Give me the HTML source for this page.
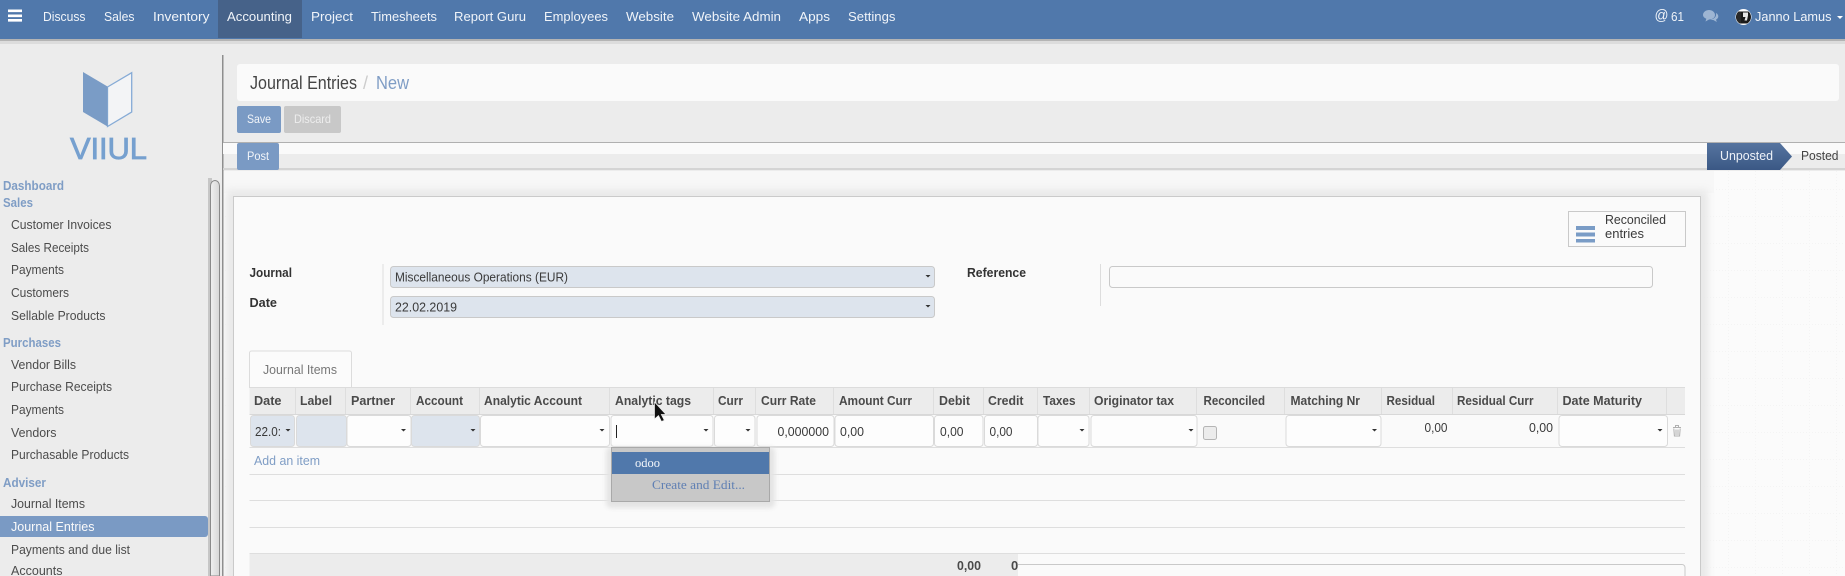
<!DOCTYPE html>
<html><head><meta charset="utf-8"><title>Journal Entries</title>
<style>
html,body{margin:0;padding:0;width:1845px;height:576px;overflow:hidden;background:#ececec}
svg{display:block;position:absolute;left:0;top:0}
text{font-family:"Liberation Sans",sans-serif;font-size:13px;fill:#444}
.n{fill:#f0f4f9}
.s{fill:#4c4c4c}
.b{font-weight:bold}
.h{font-weight:bold;fill:#4a4a4a}
.g{font-weight:bold;fill:#7f9dc5}
.t{fill:#3a3a3a}
</style></head><body>
<svg width="1845" height="576" viewBox="0 0 1845 576">
<defs>
<pattern id="dots" width="27" height="27" patternUnits="userSpaceOnUse"><rect width="27" height="27" fill="#fbfbfb"/><path d="M0 .5H27M.5 0V27" stroke="#f4f4f4" stroke-dasharray="1 2"/></pattern>
<filter id="bl" x="-5%" y="-5%" width="110%" height="110%"><feGaussianBlur stdDeviation="4"/></filter>
<filter id="bs" x="-20%" y="-20%" width="140%" height="140%"><feGaussianBlur stdDeviation="2.5"/></filter>
<linearGradient id="ug" x1="0" y1="0" x2="0" y2="1"><stop offset="0" stop-color="#56749f"/><stop offset="1" stop-color="#3b5885"/></linearGradient>
<linearGradient id="sb" x1="0" y1="0" x2="1" y2="0"><stop offset="0" stop-color="#f0f0f0"/><stop offset="1" stop-color="#d6d6d6"/></linearGradient>
<clipPath id="av"><circle cx="1743.500" cy="17" r="7.500"/></clipPath>
</defs>
<rect width="1845" height="576" fill="#ececec"/>

<!-- navbar -->
<rect y="39" width="1845" height="2" fill="#b4b4b4"/><rect y="41" width="1845" height="3" fill="#dcdcdc"/>
<rect width="1845" height="39" fill="#5078ab"/>
<rect x="218" width="84" height="38" fill="#466289"/>
<path d="M8 9.500h14v2.600H8zM8 14.500h14v2.600H8zM8 19h14v2.600H8z" fill="#fff"/>
<text class="n" x="43" y="21" textLength="42.500" lengthAdjust="spacingAndGlyphs">Discuss</text>
<text class="n" x="104" y="21" textLength="30.500" lengthAdjust="spacingAndGlyphs">Sales</text>
<text class="n" x="153" y="21" textLength="56.500" lengthAdjust="spacingAndGlyphs">Inventory</text>
<text class="n" x="227" y="21" textLength="65" lengthAdjust="spacingAndGlyphs">Accounting</text>
<text class="n" x="311" y="21" textLength="42" lengthAdjust="spacingAndGlyphs">Project</text>
<text class="n" x="371" y="21" textLength="66" lengthAdjust="spacingAndGlyphs">Timesheets</text>
<text class="n" x="454" y="21" textLength="72" lengthAdjust="spacingAndGlyphs">Report Guru</text>
<text class="n" x="544" y="21" textLength="64" lengthAdjust="spacingAndGlyphs">Employees</text>
<text class="n" x="626" y="21" textLength="48" lengthAdjust="spacingAndGlyphs">Website</text>
<text class="n" x="692" y="21" textLength="89" lengthAdjust="spacingAndGlyphs">Website Admin</text>
<text class="n" x="799" y="21" textLength="31" lengthAdjust="spacingAndGlyphs">Apps</text>
<text class="n" x="848" y="21" textLength="47.500" lengthAdjust="spacingAndGlyphs">Settings</text>
<text class="n" x="1654.500" y="20" style="font-size:15px" textLength="14" lengthAdjust="spacingAndGlyphs">@</text>
<text class="n" x="1671" y="21" textLength="13" lengthAdjust="spacingAndGlyphs">61</text>
<path d="M1703 15c0-3 3-5 6-5s6 2 6 5-3 4.500-6 4.500l-3.500 2 .8-2.800c-2-.7-3.300-2.200-3.300-3.700z" fill="#9db5d3"/>
<path d="M1716 13c1.500.8 2.300 2 2.300 3.400 0 1.400-.9 2.600-2.300 3.200l.8 2.400-3.500-2c-1 0-2-.2-3-.6 3.500 0 6.500-2.500 5.700-6.400z" fill="#9db5d3"/>
<circle cx="1743.500" cy="17" r="8" fill="#fff"/>
<g clip-path="url(#av)">
<rect x="1735" y="11.500" width="17" height="12" fill="#1a1a1a"/>
<path d="M1743 12.500h5v3l-1 5h-2.500l1-3.500h-2.500z" fill="#e6e6e6"/>
<path d="M1738 12v11M1740 12v11" stroke="#444" stroke-width=".7"/>
</g>
<text class="n" x="1755" y="21" textLength="76.500" lengthAdjust="spacingAndGlyphs">Janno Lamus</text>
<path d="M1837 16h6l-3 3z" fill="#fff"/>

<!-- main background -->
<rect x="223" y="171" width="1622" height="405" fill="url(#dots)"/>
<rect x="224" y="171" width="1490" height="22" fill="#f7f7f7"/>
<rect x="226" y="190" width="1482" height="400" fill="#e8e8e8" filter="url(#bl)"/>

<!-- sidebar divider -->
<rect x="222" y="55" width="1.500" height="521" fill="#8e8e8e"/>

<!-- logo -->
<path d="M107.500 87L131.700 72.700V112L107.500 126.500z" fill="#f3f4f6" stroke="#86abd6" stroke-width="1.300"/>
<path d="M83 72L107.500 86.500V126.500L83 112z" fill="#7a9cc6"/>
<text x="70" y="159" style="font-size:31px;fill:#76a0cf;stroke:#76a0cf;stroke-width:.8" textLength="77" lengthAdjust="spacing">VIIUL</text>

<!-- sidebar scrollbar -->
<rect x="208" y="178" width="4" height="398" fill="#c6c6c6"/>
<path d="M210.500 576V186a4.500 5.500 0 0 1 9 0V576z" fill="url(#sb)" stroke="#8a8a8a"/>

<!-- sidebar -->
<text class="g" x="3" y="190" textLength="61" lengthAdjust="spacingAndGlyphs">Dashboard</text>
<text class="g" x="3" y="207" textLength="30" lengthAdjust="spacingAndGlyphs">Sales</text>
<text class="s" x="11" y="229" textLength="100.500" lengthAdjust="spacingAndGlyphs">Customer Invoices</text>
<text class="s" x="11" y="252" textLength="78" lengthAdjust="spacingAndGlyphs">Sales Receipts</text>
<text class="s" x="11" y="274" textLength="53" lengthAdjust="spacingAndGlyphs">Payments</text>
<text class="s" x="11" y="297" textLength="58" lengthAdjust="spacingAndGlyphs">Customers</text>
<text class="s" x="11" y="320" textLength="94.500" lengthAdjust="spacingAndGlyphs">Sellable Products</text>
<text class="g" x="3" y="347" textLength="58" lengthAdjust="spacingAndGlyphs">Purchases</text>
<text class="s" x="11" y="369" textLength="65" lengthAdjust="spacingAndGlyphs">Vendor Bills</text>
<text class="s" x="11" y="391" textLength="101" lengthAdjust="spacingAndGlyphs">Purchase Receipts</text>
<text class="s" x="11" y="414" textLength="53" lengthAdjust="spacingAndGlyphs">Payments</text>
<text class="s" x="11" y="437" textLength="45.500" lengthAdjust="spacingAndGlyphs">Vendors</text>
<text class="s" x="11" y="459" textLength="118" lengthAdjust="spacingAndGlyphs">Purchasable Products</text>
<text class="g" x="3" y="487" textLength="43" lengthAdjust="spacingAndGlyphs">Adviser</text>
<text class="s" x="11" y="508" textLength="74" lengthAdjust="spacingAndGlyphs">Journal Items</text>
<path d="M0 516H205a3 3 0 0 1 3 3V534a3 3 0 0 1-3 3H0z" fill="#7a9ac4"/>
<text x="11" y="531" style="fill:#fafafa" textLength="83.500" lengthAdjust="spacingAndGlyphs">Journal Entries</text>
<text class="s" x="11" y="554" textLength="119" lengthAdjust="spacingAndGlyphs">Payments and due list</text>
<text class="s" x="11" y="575" textLength="51.500" lengthAdjust="spacingAndGlyphs">Accounts</text>

<!-- breadcrumb -->
<rect x="237" y="64" width="1602" height="37" rx="3" fill="#fafafa"/>
<text x="250" y="89" style="font-size:18px;fill:#444" textLength="107" lengthAdjust="spacingAndGlyphs">Journal Entries</text>
<text x="363" y="89" style="font-size:18px;fill:#ccc">/</text>
<text x="376" y="89" style="font-size:18px;fill:#7f9dc5" textLength="33" lengthAdjust="spacingAndGlyphs">New</text>
<rect x="237" y="106" width="44" height="27" rx="2" fill="#7a9ac4"/>
<text x="247" y="123" style="font-size:12px;fill:#f2f5f9" textLength="24" lengthAdjust="spacingAndGlyphs">Save</text>
<rect x="284" y="106" width="57" height="27" rx="2" fill="#c8c8c8"/>
<text x="294" y="123" style="font-size:12px;fill:#ededed" textLength="37" lengthAdjust="spacingAndGlyphs">Discard</text>

<!-- status bar -->
<rect x="223" y="142" width="1622" height="1" fill="#b0b0b0"/>
<rect x="223" y="143" width="1622" height="11" fill="#fafafa"/>
<rect x="223" y="168" width="1622" height="2" fill="#d4d4d4"/>
<rect x="237" y="143" width="42" height="27" rx="2" fill="#7a9ac4"/>
<text x="247" y="160" style="font-size:12px;fill:#f2f5f9" textLength="22" lengthAdjust="spacingAndGlyphs">Post</text>
<path d="M1707 143H1780L1792 156.500 1780 170H1707z" fill="url(#ug)"/>
<text x="1720" y="160" style="fill:#eef2f8" textLength="53" lengthAdjust="spacingAndGlyphs">Unposted</text>
<text x="1801" y="160" style="fill:#444" textLength="37.500" lengthAdjust="spacingAndGlyphs">Posted</text>

<!-- sheet -->
<rect x="233.500" y="196.500" width="1467" height="400" fill="#fafafa" stroke="#cacaca"/>

<rect x="1568.500" y="211.500" width="117" height="35" fill="#fafafa" stroke="#c9c9c9"/>
<path d="M1576 226h19v4h-19zM1576 232.500h19v4h-19zM1576 239h19v3.500h-19z" fill="#7a9cc6"/>
<text class="t" x="1605" y="224" style="font-size:12.500px" textLength="61" lengthAdjust="spacingAndGlyphs">Reconciled</text>
<text class="t" x="1605" y="238" style="font-size:12.500px" textLength="39" lengthAdjust="spacingAndGlyphs">entries</text>

<text class="b" x="249.500" y="277" style="fill:#333" textLength="42.500" lengthAdjust="spacingAndGlyphs">Journal</text>
<text class="b" x="249.500" y="307" style="fill:#333" textLength="27.500" lengthAdjust="spacingAndGlyphs">Date</text>
<rect x="382.500" y="264" width="1" height="61" fill="#ddd"/>
<rect x="390.500" y="266.500" width="544" height="21" rx="3" fill="#dde4ed" stroke="#c9c9c9"/>
<text class="t" x="395" y="281.500" textLength="173" lengthAdjust="spacingAndGlyphs">Miscellaneous Operations (EUR)</text>
<path d="M925.500 275h5l-2.500 2.500z" fill="#333"/>
<rect x="390.500" y="296.500" width="544" height="21" rx="3" fill="#dde4ed" stroke="#c9c9c9"/>
<text class="t" x="395" y="311.500" textLength="62" lengthAdjust="spacingAndGlyphs">22.02.2019</text>
<path d="M925.500 305h5l-2.500 2.500z" fill="#333"/>
<text class="b" x="967" y="277" style="fill:#333" textLength="59" lengthAdjust="spacingAndGlyphs">Reference</text>
<rect x="1100" y="264" width="1" height="42" fill="#ddd"/>
<rect x="1109.500" y="266.500" width="543" height="21" rx="3" fill="#fafafa" stroke="#c9c9c9"/>

<!-- tab -->
<path d="M249.500 388V353a2 2 0 0 1 2-2H349.500a2 2 0 0 1 2 2V388" fill="#fbfbfb" stroke="#dcdcdc"/>
<text x="263" y="374" style="fill:#777" textLength="74" lengthAdjust="spacingAndGlyphs">Journal Items</text>

<!-- table header -->
<rect x="249.500" y="388" width="1435.500" height="26" fill="#ececec"/>
<rect x="249.500" y="387" width="1435.500" height="1" fill="#dcdcdc"/>
<rect x="249.500" y="414" width="1435.500" height="1" fill="#d8d8d8"/>
<path d="M295.500 388v26M345.500 388v26M410.500 388v26M479.500 388v26M609.500 388v26M713.500 388v26M755.500 388v26M833.500 388v26M933.500 388v26M983.500 388v26M1037.500 388v26M1089.500 388v26M1196.500 388v26M1284.500 388v26M1381.500 388v26M1452.500 388v26M1557.500 388v26M1666.500 388v26" stroke="#dedede" fill="none"/>
<text class="h" x="254" y="405" textLength="27.500" lengthAdjust="spacingAndGlyphs">Date</text>
<text class="h" x="300" y="405" textLength="32" lengthAdjust="spacingAndGlyphs">Label</text>
<text class="h" x="351" y="405" textLength="44" lengthAdjust="spacingAndGlyphs">Partner</text>
<text class="h" x="416" y="405" textLength="47" lengthAdjust="spacingAndGlyphs">Account</text>
<text class="h" x="484" y="405" textLength="98" lengthAdjust="spacingAndGlyphs">Analytic Account</text>
<text class="h" x="615" y="405" textLength="76" lengthAdjust="spacingAndGlyphs">Analytic tags</text>
<text class="h" x="718" y="405" textLength="25" lengthAdjust="spacingAndGlyphs">Curr</text>
<text class="h" x="761" y="405" textLength="55" lengthAdjust="spacingAndGlyphs">Curr Rate</text>
<text class="h" x="839" y="405" textLength="73" lengthAdjust="spacingAndGlyphs">Amount Curr</text>
<text class="h" x="939" y="405" textLength="31" lengthAdjust="spacingAndGlyphs">Debit</text>
<text class="h" x="988" y="405" textLength="35.500" lengthAdjust="spacingAndGlyphs">Credit</text>
<text class="h" x="1043" y="405" textLength="32.500" lengthAdjust="spacingAndGlyphs">Taxes</text>
<text class="h" x="1094" y="405" textLength="80" lengthAdjust="spacingAndGlyphs">Originator tax</text>
<text class="h" x="1203.500" y="405" textLength="61.500" lengthAdjust="spacingAndGlyphs">Reconciled</text>
<text class="h" x="1290.500" y="405" textLength="69.500" lengthAdjust="spacingAndGlyphs">Matching Nr</text>
<text class="h" x="1386.500" y="405" textLength="48.500" lengthAdjust="spacingAndGlyphs">Residual</text>
<text class="h" x="1457" y="405" textLength="76.500" lengthAdjust="spacingAndGlyphs">Residual Curr</text>
<text class="h" x="1562.500" y="405" textLength="79.500" lengthAdjust="spacingAndGlyphs">Date Maturity</text>

<!-- row cells -->
<g stroke="#dadada">
<rect x="250.500" y="415.500" width="44" height="31" rx="3" fill="#dde4ed"/>
<rect x="296.500" y="415.500" width="50" height="31" rx="3" fill="#dde4ed"/>
<rect x="347" y="415.500" width="64" height="31" rx="3" fill="#fdfdfd"/>
<rect x="411.500" y="415.500" width="68" height="31" rx="3" fill="#dde4ed"/>
<rect x="480.500" y="415.500" width="129" height="31" rx="3" fill="#fdfdfd"/>
<rect x="611" y="415.500" width="102" height="31" rx="3" fill="#fdfdfd"/>
<rect x="714.500" y="415.500" width="40.500" height="31" rx="3" fill="#fdfdfd"/>
<rect x="757" y="415.500" width="77" height="31" rx="3" fill="#fdfdfd"/>
<rect x="835" y="415.500" width="98.500" height="31" rx="3" fill="#fdfdfd"/>
<rect x="934.500" y="415.500" width="48.500" height="31" rx="3" fill="#fdfdfd"/>
<rect x="984.500" y="415.500" width="53" height="31" rx="3" fill="#fdfdfd"/>
<rect x="1038" y="415.500" width="51" height="31" rx="3" fill="#fdfdfd"/>
<rect x="1091" y="415.500" width="106" height="31" rx="3" fill="#fdfdfd"/>
<rect x="1286" y="415.500" width="95" height="31" rx="3" fill="#fdfdfd"/>
<rect x="1559" y="415.500" width="108.500" height="31" rx="3" fill="#fdfdfd"/>
</g>
<text class="t" x="255" y="436" textLength="26" lengthAdjust="spacingAndGlyphs">22.0:</text>
<path d="M285.500 429h5l-2.500 2.500zM401 429h5l-2.500 2.500zM470.500 429h5l-2.500 2.500zM599.500 429h5l-2.500 2.500zM703.500 429h5l-2.500 2.500zM745.500 429h5l-2.500 2.500zM1079.500 429h5l-2.500 2.500zM1188.500 429h5l-2.500 2.500zM1372 429h5l-2.500 2.500zM1657.500 429h5l-2.500 2.500z" fill="#333"/>
<rect x="616" y="425" width="1" height="13" fill="#222"/>
<text class="t" x="777.500" y="436" textLength="51.500" lengthAdjust="spacingAndGlyphs">0,000000</text>
<text class="t" x="840" y="436" textLength="24" lengthAdjust="spacingAndGlyphs">0,00</text>
<text class="t" x="940" y="436" textLength="23.500" lengthAdjust="spacingAndGlyphs">0,00</text>
<text class="t" x="989.500" y="436" textLength="23" lengthAdjust="spacingAndGlyphs">0,00</text>
<rect x="1203.500" y="426.500" width="13" height="13" rx="2" fill="#ececec" stroke="#b5b5b5"/>
<text class="t" x="1424.500" y="432" textLength="23" lengthAdjust="spacingAndGlyphs">0,00</text>
<text class="t" x="1529" y="432" textLength="24" lengthAdjust="spacingAndGlyphs">0,00</text>
<path d="M1673 427.500h8M1675.500 427v-1.500h3v1.500M1673.800 428.500l.6 7.500h5.200l.6-7.500M1676 429.500v5.500M1678 429.500v5.500" stroke="#b0b0b0" fill="none"/>

<!-- table lines -->
<path d="M249.500 447.500H1685M249.500 474.500H1685M249.500 500.500H1685M249.500 527.500H1685" stroke="#dedede" fill="none"/>
<text x="254" y="465" style="fill:#7f9dc5" textLength="66" lengthAdjust="spacingAndGlyphs">Add an item</text>

<!-- footer -->
<rect x="249.500" y="553" width="768.500" height="23" fill="#ececec"/>
<rect x="249.500" y="553" width="1435.500" height="1" fill="#dedede"/>
<path d="M1018 564.500H1682a3 3 0 0 1 3 3V576" fill="none" stroke="#c9c9c9"/>
<text class="h" x="957" y="570" textLength="24" lengthAdjust="spacingAndGlyphs">0,00</text>
<text class="h" x="1011" y="570">0</text>

<!-- dropdown -->
<rect x="606" y="447" width="169" height="61" rx="5" fill="#e4e4e4" filter="url(#bs)"/>
<rect x="611.500" y="447.500" width="158" height="54" fill="#c8c8c8" stroke="#a9a9a9"/>
<rect x="612" y="452" width="157" height="22" fill="#5078ab"/>
<text x="635" y="467" style="font-family:'Liberation Serif',serif;font-size:13px;fill:#f3f6fa" textLength="25" lengthAdjust="spacingAndGlyphs">odoo</text>
<text x="652" y="489" style="font-family:'Liberation Serif',serif;font-size:13px;fill:#5f7fb3" textLength="93" lengthAdjust="spacingAndGlyphs">Create and Edit...</text>

<!-- cursor -->
<path d="M654.500 402V419l4-3.500 3 6 2.800-1.200-3-5.800H666z" fill="#111" stroke="#eee" stroke-width=".7"/>
</svg>
</body></html>
